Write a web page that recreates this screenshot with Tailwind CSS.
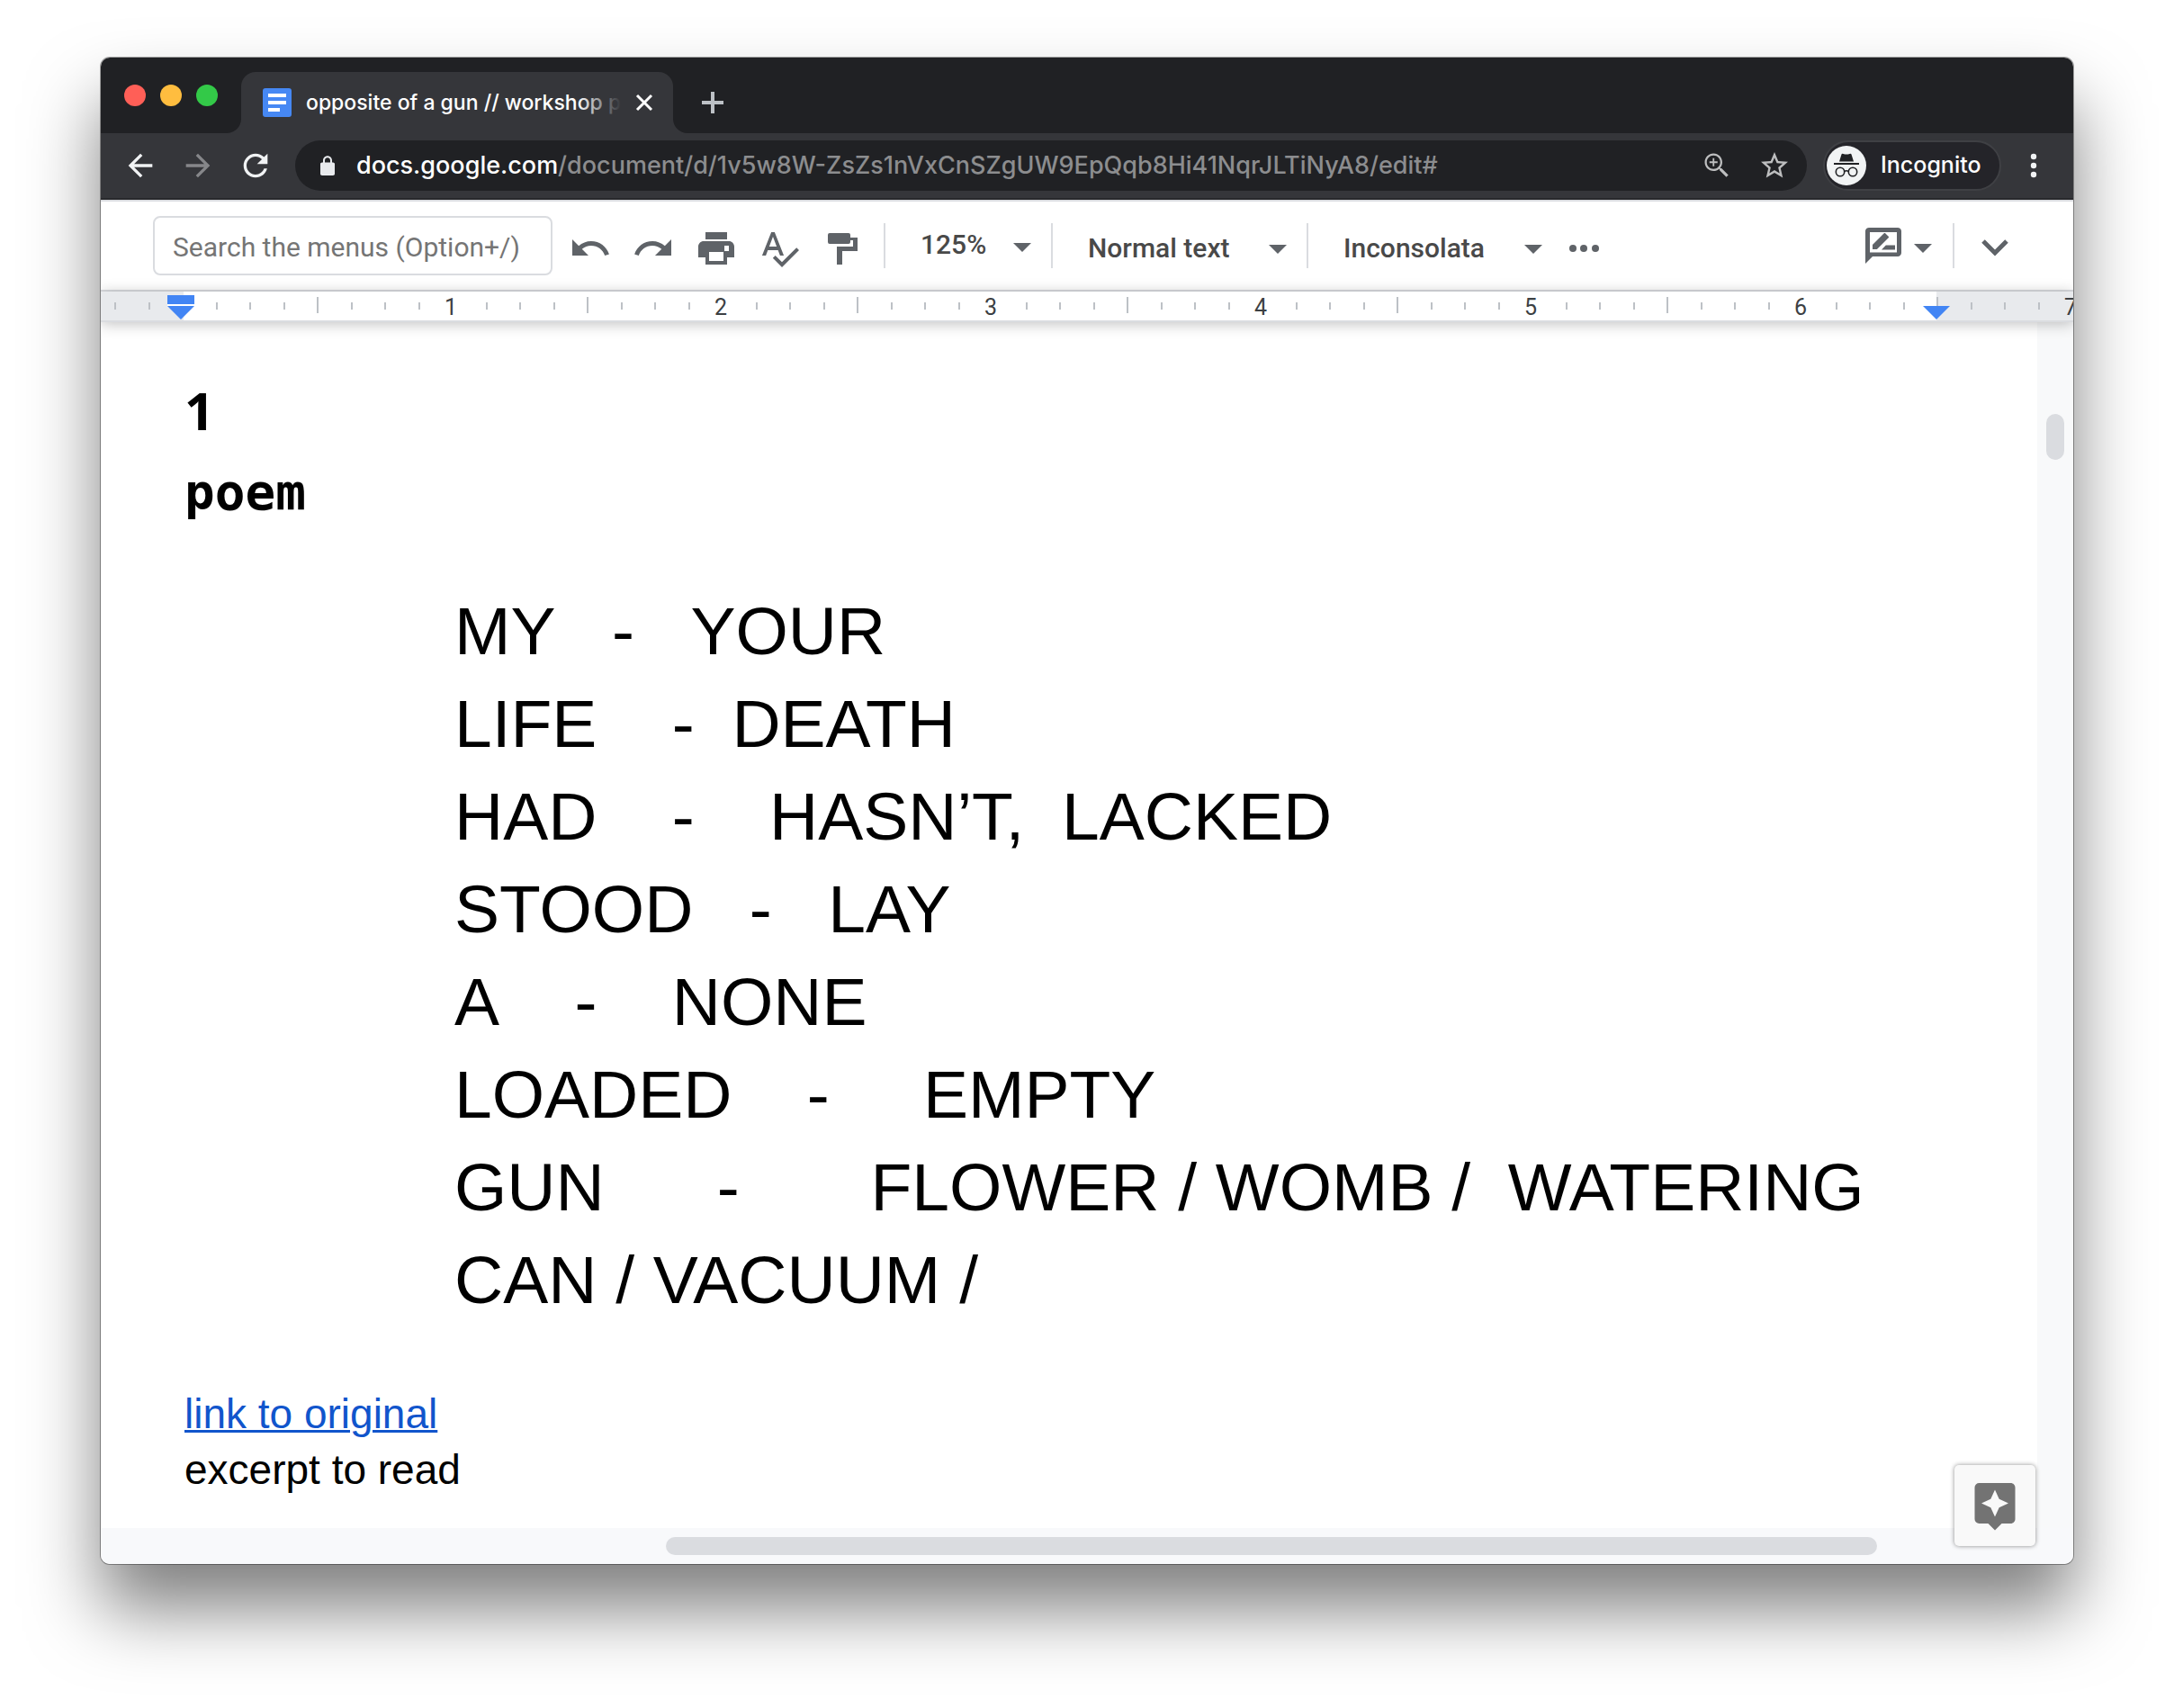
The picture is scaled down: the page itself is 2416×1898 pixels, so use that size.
<!DOCTYPE html>
<html lang="en">
<head>
<meta charset="utf-8">
<title>opposite of a gun // workshop</title>
<script src="https://cdn.jsdelivr.net/npm/@tailwindcss/browser@4"></script>
</head>
<body class="bg-white flex min-h-screen px-28 pt-16 pb-40">
<svg class="hidden">
  <symbol id="ticks" viewBox="0 0 300 32">
    <path fill="#bdc1c6" d="M0 6h2v18h-2zM38 12h2v8h-2zM75 12h2v8h-2zM113 12h2v8h-2zM188 12h2v8h-2zM225 12h2v8h-2zM263 12h2v8h-2z"/>
  </symbol>
  <symbol id="caret" viewBox="0 0 20 10"><path fill="#5f6368" d="M0 0h20L10 10z"/></symbol>
</svg>

<div class="relative flex flex-1 min-w-0 flex-col overflow-hidden rounded-[10px] bg-white font-[Roboto,sans-serif] shadow-[0_0_0_1px_rgba(0,0,0,0.35),0_50px_80px_rgba(0,0,0,0.5)]">

  <!-- Tab strip -->
  <header class="flex h-[84px] items-center bg-[#202124] pl-[26px]">
    <div class="flex gap-4">
      <button aria-label="Close window" class="size-6 rounded-full bg-[#ff5f57]"></button>
      <button aria-label="Minimize window" class="size-6 rounded-full bg-[#ffbd3f]"></button>
      <button aria-label="Zoom window" class="size-6 rounded-full bg-[#33c948]"></button>
    </div>
    <div class="relative ml-[26px] flex h-[68px] w-[480px] items-center self-end rounded-t-2xl bg-[#35363a] pl-6 pr-[22px]">
      <svg class="absolute -left-4 bottom-0 size-4" viewBox="0 0 16 16"><path fill="#35363a" d="M16 0v16H0A16 16 0 0 0 16 0z"/></svg>
      <svg class="absolute -right-4 bottom-0 size-4" viewBox="0 0 16 16"><path fill="#35363a" d="M0 0v16h16A16 16 0 0 1 0 0z"/></svg>
      <svg class="size-8 shrink-0" viewBox="0 0 32 32"><rect width="32" height="32" rx="3" fill="#4688f4"/><path fill="#fff" d="M6 6h20v4H6zM6 14h20v4H6zM6 22h13v4H6z"/></svg>
      <div class="relative ml-4 w-[350px] overflow-hidden whitespace-nowrap font-[Inter,sans-serif] text-[23px] font-medium leading-8 text-white">opposite of a gun // workshop p
        <span class="absolute inset-y-0 right-0 w-12 bg-linear-to-r from-[#35363a]/0 to-[#35363a]"></span>
      </div>
      <button aria-label="Close tab" class="ml-auto"><svg class="size-5" viewBox="0 0 20 20"><path d="M2 2l16 16M18 2L2 18" stroke="#fff" stroke-width="3"/></svg></button>
    </div>
    <button aria-label="New tab" class="ml-8 mt-4"><svg class="size-6" viewBox="0 0 24 24"><path d="M12 0v24M0 12h24" stroke="#bdc1c6" stroke-width="4"/></svg></button>
  </header>

  <!-- Address bar -->
  <nav class="flex h-[74px] items-center border-b-2 border-[#28292c] bg-[#35363a] px-6">
    <div class="flex gap-6">
      <button aria-label="Back"><svg class="size-10" viewBox="0 0 24 24"><path fill="#f1f3f4" d="M20 11H7.830l5.590-5.590L12 4l-8 8 8 8 1.410-1.410L7.830 13H20v-2z"/></svg></button>
      <button aria-label="Forward"><svg class="size-10" viewBox="0 0 24 24"><path fill="#86878a" d="M12 4l-1.410 1.410L16.170 11H4v2h12.170l-5.580 5.590L12 20l8-8z"/></svg></button>
      <button aria-label="Reload"><svg class="size-10" viewBox="0 0 24 24"><path fill="#f1f3f4" d="M17.650 6.350C16.200 4.900 14.210 4 12 4c-4.420 0-7.990 3.580-7.990 8s3.570 8 7.990 8c3.730 0 6.840-2.550 7.730-6h-2.080c-.82 2.330-3.040 4-5.650 4-3.310 0-6-2.690-6-6s2.690-6 6-6c1.660 0 3.140.69 4.220 1.780L13 11h7V4l-2.350 2.350z"/></svg></button>
    </div>
    <div class="ml-6 flex h-14 min-w-0 flex-1 items-center rounded-full bg-[#202124] pl-6 pr-[18px]">
      <svg class="size-6 shrink-0" viewBox="0 0 24 24"><path fill="#e8eaed" d="M18 8.500h-1V6.500c0-3-2.200-5.200-5-5.200S7 3.500 7 6.500v2H6c-1.100 0-2 .7-2 1.800v11c0 1 .9 1.700 2 1.700h12c1.100 0 2-.7 2-1.700v-11c0-1.100-.9-1.800-2-1.800zM9 8.500v-2c0-2 1.300-3.200 3-3.200s3 1.200 3 3.200v2z"/></svg>
      <div class="ml-5 min-w-0 flex-1 truncate font-[Inter,sans-serif] text-[27px] font-medium leading-10 text-[#8c8d8f]"><span class="text-white">docs.google.com</span>/document/d/1v5w8W-ZsZs1nVxCnSZgUW9EpQqb8Hi41NqrJLTiNyA8/edit#</div>
      <button aria-label="Zoom"><svg class="size-9" viewBox="0 0 24 24"><path fill="#bdbebf" d="M15.500 14h-.79l-.28-.27C15.410 12.590 16 11.110 16 9.500 16 5.910 13.090 3 9.500 3S3 5.910 3 9.500 5.910 16 9.500 16c1.610 0 3.090-.59 4.230-1.570l.27.28v.79l5 4.990L20.490 19l-4.990-5zm-6 .5c-2.760 0-5-2.240-5-5s2.240-5 5-5 5 2.240 5 5-2.240 5-5 5zM10.100 6.500H8.900v2.400H6.500v1.200h2.400v2.400h1.200v-2.400h2.400V8.900h-2.400z"/></svg></button>
      <button aria-label="Bookmark" class="ml-7"><svg class="size-9" viewBox="0 0 24 24"><path fill="#bdbebf" d="M22 9.240l-7.190-.62L12 2 9.190 8.630 2 9.240l5.460 4.730L5.820 21 12 17.270 18.180 21l-1.630-7.030L22 9.240zM12 15.400l-3.760 2.270 1-4.280-3.320-2.880 4.380-.38L12 6.100l1.710 4.040 4.380.38-3.320 2.880 1 4.280L12 15.400z"/></svg></button>
    </div>
    <button class="ml-[18px] flex h-14 w-[198px] items-center gap-4 rounded-full border-2 border-[#3f4044] bg-[#242429] pl-[2px] font-[Inter,sans-serif] text-[25px] font-medium text-white">
      <svg class="size-11 shrink-0" viewBox="0 0 44 44"><circle cx="22" cy="22" r="22" fill="#f1f3f4"/><path fill="#202124" d="M14 17.500l2.500-8q.5-1.200 2-.6 3.500 1.400 7 0 1.500-.6 2 .6l2.500 8zM8 19h28v2H8z"/><g fill="none" stroke="#202124" stroke-width="1.600"><circle cx="15" cy="29" r="4.700"/><circle cx="29" cy="29" r="4.700"/><path d="M19.500 28.500q2.500-1.500 5 0"/></g></svg>
      Incognito
    </button>
    <button aria-label="Browser menu" class="ml-4"><svg class="size-10" viewBox="0 0 40 40" fill="#f1f3f4"><circle cx="20" cy="10" r="3.200"/><circle cx="20" cy="20" r="3.200"/><circle cx="20" cy="30" r="3.200"/></svg></button>
  </nav>

  <!-- Document toolbar -->
  <div class="flex h-[102px] shrink-0 items-center border-y-2 border-[#dadce0] pl-[58px] pr-[63px] text-[30px] text-[#494949]">
    <input type="text" aria-label="Search the menus" placeholder="Search the menus (Option+/)" class="h-[66px] w-[444px] rounded-lg border-2 border-[#dadce0] px-5 pt-[2px] text-[30px] placeholder:text-[#757575] placeholder:opacity-100">
    <div class="ml-[18px] flex gap-[22px] pt-[6px]">
      <button aria-label="Undo"><svg class="size-12" viewBox="0 0 24 24"><path fill="#5f6368" d="M12.500 8c-2.650 0-5.050.99-6.900 2.600L2 7v9h9l-3.620-3.620c1.390-1.160 3.160-1.880 5.120-1.880 3.540 0 6.550 2.310 7.600 5.500l2.370-.78C21.080 11.030 17.150 8 12.500 8z"/></svg></button>
      <button aria-label="Redo"><svg class="size-12" viewBox="0 0 24 24"><path fill="#5f6368" d="M18.400 10.600C16.550 8.990 14.150 8 11.500 8c-4.650 0-8.580 3.030-9.960 7.220L3.900 16c1.050-3.190 4.050-5.500 7.600-5.500 1.950 0 3.730.72 5.120 1.880L13 16h9V7l-3.600 3.600z"/></svg></button>
      <button aria-label="Print"><svg class="size-12" viewBox="0 0 24 24"><path fill="#5f6368" d="M19 8H5c-1.660 0-3 1.340-3 3v6h4v4h12v-4h4v-6c0-1.660-1.340-3-3-3zm-3 11H8v-5h8v5zm3-5.500h-2.500V10.500H19zM18 3H6v4h12V3z"/></svg></button>
      <button aria-label="Spelling check"><svg class="size-12" viewBox="0 0 24 24"><path fill="#5f6368" d="M12.450 16h2.090L9.430 3H7.570L2.460 16h2.090l1.120-3h5.640l1.140 3zm-6.020-5L8.500 5.480 10.570 11H6.430zm15.160.59l-8.090 8.090L9.830 16l-1.410 1.410 5.090 5.090L23 13l-1.410-1.410z"/></svg></button>
      <button aria-label="Paint format"><svg class="size-12" viewBox="0 0 24 24"><path fill="#5f6368" d="M5 3.500h10.500a1 1 0 0 1 1 1V6h4v7.500H12V21H9V11h9V7.500h-1.500v1a1 1 0 0 1-1 1H5a1 1 0 0 1-1-1v-4a1 1 0 0 1 1-1z"/></svg></button>
    </div>
    <div class="ml-[22px] h-[50px] w-[2px] bg-[#dadce0]"></div>
    <div class="grid w-[184px] items-center">
      <select aria-label="Zoom level" class="col-start-1 row-start-1 w-full appearance-none pb-1 pl-[39px] font-medium"><option>125%</option></select>
      <svg class="pointer-events-none col-start-1 row-start-1 mr-[22px] mt-1 h-[10px] w-5 justify-self-end"><use href="#caret"/></svg>
    </div>
    <div class="h-[50px] w-[2px] bg-[#dadce0]"></div>
    <div class="grid w-[282px] items-center pt-1">
      <select aria-label="Style" class="col-start-1 row-start-1 w-full appearance-none pl-[39px] font-medium"><option>Normal text</option></select>
      <svg class="pointer-events-none col-start-1 row-start-1 mr-[22px] mt-1 h-[10px] w-5 justify-self-end"><use href="#caret"/></svg>
    </div>
    <div class="h-[50px] w-[2px] bg-[#dadce0]"></div>
    <div class="grid w-[282px] items-center pt-1">
      <select aria-label="Font" class="col-start-1 row-start-1 w-full appearance-none pl-[39px] font-medium"><option>Inconsolata</option></select>
      <svg class="pointer-events-none col-start-1 row-start-1 mr-[22px] mt-1 h-[10px] w-5 justify-self-end"><use href="#caret"/></svg>
    </div>
    <button aria-label="More" class="pt-[6px]"><svg class="size-12" viewBox="0 0 48 48" fill="#5f6368"><circle cx="12" cy="24" r="4"/><circle cx="24" cy="24" r="4"/><circle cx="37" cy="24" r="4"/></svg></button>
    <button aria-label="Editing mode" class="ml-auto flex items-center gap-[10px]">
      <svg class="size-12" viewBox="0 0 24 24"><path fill="#5f6368" d="M20 2H4c-1.100 0-2 .9-2 2v18l4-4h14c1.100 0 2-.9 2-2V4c0-1.100-.9-2-2-2zm-.5 13.700H4.500V4.500h15zM6 14h2.470l6.380-6.380c.2-.2.2-.51 0-.71l-1.770-1.770c-.2-.2-.51-.2-.71 0L6 11.530zM11 14.200h7.500v-2.400h-5.100z"/></svg>
      <svg class="mt-[6px] h-[10px] w-5"><use href="#caret"/></svg>
    </button>
    <div class="ml-[23px] h-[50px] w-[2px] bg-[#dadce0]"></div>
    <button aria-label="Hide menus" class="ml-[21px] pt-1"><svg class="size-12" viewBox="0 0 48 48"><path d="M11 17l13 13 13-13" fill="none" stroke="#5f6368" stroke-width="5"/></svg></button>
  </div>

  <!-- Ruler -->
  <div class="relative z-10 flex h-[34px] shrink-0 border-b-2 border-[#dadce0] bg-white text-[25px] leading-8 text-[#3c4043] shadow-[0_2px_16px_rgba(0,0,0,0.25)]">
    <div class="flex min-w-0 flex-1 overflow-hidden">
      <div class="-ml-[60px] flex h-8 w-[300px] shrink-0">
        <div class="w-[152px] bg-[#e8eaed]"></div>
        <svg class="-ml-[152px] h-8 w-[300px] shrink-0"><use href="#ticks"/></svg>
      </div>
      <div class="grid w-[300px] shrink-0 justify-items-center"><svg class="col-start-1 row-start-1 h-8 w-[300px]"><use href="#ticks"/></svg><span class="col-start-1 row-start-1 pr-[2px] pt-[2px]">1</span></div>
      <div class="grid w-[300px] shrink-0 justify-items-center"><svg class="col-start-1 row-start-1 h-8 w-[300px]"><use href="#ticks"/></svg><span class="col-start-1 row-start-1 pr-[2px] pt-[2px]">2</span></div>
      <div class="grid w-[300px] shrink-0 justify-items-center"><svg class="col-start-1 row-start-1 h-8 w-[300px]"><use href="#ticks"/></svg><span class="col-start-1 row-start-1 pr-[2px] pt-[2px]">3</span></div>
      <div class="grid w-[300px] shrink-0 justify-items-center"><svg class="col-start-1 row-start-1 h-8 w-[300px]"><use href="#ticks"/></svg><span class="col-start-1 row-start-1 pr-[2px] pt-[2px]">4</span></div>
      <div class="grid w-[300px] shrink-0 justify-items-center"><svg class="col-start-1 row-start-1 h-8 w-[300px]"><use href="#ticks"/></svg><span class="col-start-1 row-start-1 pr-[2px] pt-[2px]">5</span></div>
      <div class="grid w-[300px] shrink-0 justify-items-center"><svg class="col-start-1 row-start-1 h-8 w-[300px]"><use href="#ticks"/></svg><span class="col-start-1 row-start-1 pr-[2px] pt-[2px]">6</span></div>
      <div class="grid w-[300px] shrink-0 justify-items-center bg-[#e8eaed]"><svg class="col-start-1 row-start-1 h-8 w-[300px]"><use href="#ticks"/></svg><span class="col-start-1 row-start-1 pr-[2px] pt-[2px]">7</span></div>
    </div>
    <svg class="absolute left-[74px] top-1 h-7 w-[30px]" viewBox="0 0 30 28"><path fill="#4285f4" d="M0 0h30v10H0zM0 12h30L15 27z"/><path fill="#fff" d="M0 10h30v2H0z"/></svg>
    <svg class="absolute left-[2025px] top-4 h-[15px] w-[30px]" viewBox="0 0 30 15"><path fill="#4285f4" d="M0 0h30L15 15z"/></svg>
  </div>

  <!-- Page and scrollbars -->
  <div class="flex flex-1">
    <main class="min-w-0 flex-1 pl-[93px] pt-14 text-black">
      <h1 class="font-['Open_Sans',sans-serif] text-[58px] font-bold leading-[84px]">1</h1>
      <h2 class="mt-1 font-['DejaVu_Sans_Mono',monospace] text-[56px] font-bold leading-[90px]">poem</h2>
      <p class="ml-[300px] mr-[112px] mt-[58px] whitespace-pre-wrap font-['Liberation_Sans',Arial,sans-serif] text-[75px] leading-[103px]">MY<span class="[font-kerning:none]">   -   </span>YOUR
LIFE    -  DEATH
HAD    -    HASN’T,  LACKED
STOOD   -   LAY
A<span class="[font-kerning:none]">    -    </span>NONE
LOADED    -     EMPTY
GUN      -       FLOWER / WOMB /  WATERING CAN / VACUUM /</p>
      <p class="mt-[66px] pb-8 font-['Liberation_Sans',Arial,sans-serif] text-[46px] leading-[62px]"><a href="#original" class="text-[#1155cc] underline decoration-[3px]">link to original</a><br>excerpt to read</p>
    </main>
    <div class="w-10 bg-[#f8f9fa] px-[10px] pt-[102px]"><div class="h-[51px] rounded-full bg-[#dadce0]"></div></div>
  </div>
  <div class="flex h-10 shrink-0 items-center bg-[#f8f9fb] pl-[628px] pr-[218px]"><div class="h-5 flex-1 rounded-full bg-[#dadce0]"></div></div>

  <button aria-label="Explore" class="absolute bottom-5 right-[42px] z-10 grid size-[90px] place-items-center rounded-[5px] bg-[#f9f9f9] shadow-[0_0_5px_rgba(0,0,0,0.45)]">
    <svg class="size-[60px]" viewBox="0 0 24 24"><path fill="#737373" d="M19 2H5a2 2 0 0 0-2 2v14a2 2 0 0 0 2 2h4l3 3 3-3h4c1.100 0 2-.9 2-2V4c0-1.100-.9-2-2-2zm-5.120 10.880L12 17l-1.880-4.120L6 11l4.120-1.880L12 5l1.880 4.120L18 11l-4.120 1.880z"/></svg>
  </button>
</div>
</body>
</html>
